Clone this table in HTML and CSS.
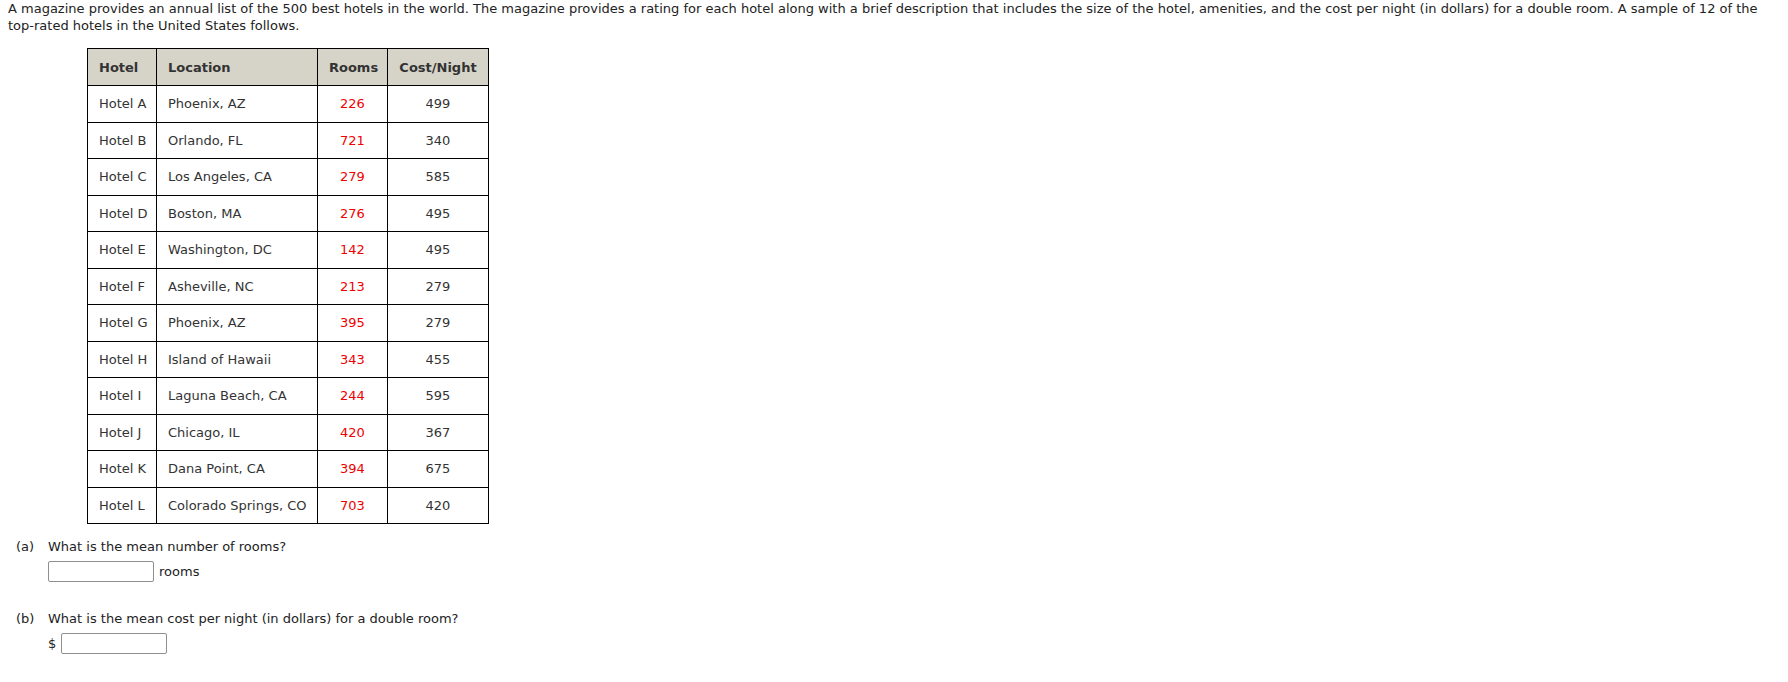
FILE: index.html
```html
<!DOCTYPE html>
<html>
<head>
<meta charset="utf-8">
<link rel="stylesheet" href="styles.css">
</head>
<body>
<p class="intro">A magazine provides an annual list of the 500 best hotels in the world. The magazine provides a rating for each hotel along with a brief description that includes the size of the hotel, amenities, and the cost per night (in dollars) for a double room. A sample of 12 of the top-rated hotels in the United States follows.</p>
<table class="data">
  <colgroup>
    <col class="c-hotel"><col class="c-loc"><col class="c-rooms"><col class="c-cost">
  </colgroup>
  <thead>
    <tr><th class="left">Hotel</th><th class="left">Location</th><th>Rooms</th><th>Cost/Night</th></tr>
  </thead>
  <tbody>
    <tr><td class="left">Hotel A</td><td class="left">Phoenix, AZ</td><td class="red">226</td><td>499</td></tr>
    <tr><td class="left">Hotel B</td><td class="left">Orlando, FL</td><td class="red">721</td><td>340</td></tr>
    <tr><td class="left">Hotel C</td><td class="left">Los Angeles, CA</td><td class="red">279</td><td>585</td></tr>
    <tr><td class="left">Hotel D</td><td class="left">Boston, MA</td><td class="red">276</td><td>495</td></tr>
    <tr><td class="left">Hotel E</td><td class="left">Washington, DC</td><td class="red">142</td><td>495</td></tr>
    <tr><td class="left">Hotel F</td><td class="left">Asheville, NC</td><td class="red">213</td><td>279</td></tr>
    <tr><td class="left">Hotel G</td><td class="left">Phoenix, AZ</td><td class="red">395</td><td>279</td></tr>
    <tr><td class="left">Hotel H</td><td class="left">Island of Hawaii</td><td class="red">343</td><td>455</td></tr>
    <tr><td class="left">Hotel I</td><td class="left">Laguna Beach, CA</td><td class="red">244</td><td>595</td></tr>
    <tr><td class="left">Hotel J</td><td class="left">Chicago, IL</td><td class="red">420</td><td>367</td></tr>
    <tr><td class="left">Hotel K</td><td class="left">Dana Point, CA</td><td class="red">394</td><td>675</td></tr>
    <tr><td class="left">Hotel L</td><td class="left">Colorado Springs, CO</td><td class="red">703</td><td>420</td></tr>
  </tbody>
</table>
<div class="questions">
  <div class="question q-a">
    <div class="q-line"><span class="q-label">(a)</span><span class="q-text">What is the mean number of rooms?</span></div>
    <div class="answer answer-a"><input class="box" type="text"><span class="unit">rooms</span></div>
  </div>
  <div class="question q-b">
    <div class="q-line"><span class="q-label">(b)</span><span class="q-text">What is the mean cost per night (in dollars) for a double room?</span></div>
    <div class="answer answer-b"><span class="dollar">$</span><input class="box" type="text"></div>
  </div>
</div>
</body>
</html>
```
FILE: styles.css
```css
html, body {
  margin: 0;
  padding: 0;
  background: #fff;
}
body {
  font-family: Verdana, "DejaVu Sans", sans-serif;
  font-size: 13px;
  color: #222;
}
.intro {
  margin: 0;
  padding: 0 8px;
  line-height: 17px;
}
.data {
  margin: 14px 0 0 87px;
  border-collapse: collapse;
  table-layout: fixed;
  width: 401px;
  color: #333;
}
.c-hotel { width: 69px; }
.c-loc { width: 161px; }
.c-rooms { width: 70px; }
.c-cost { width: 101px; }
.data th, .data td {
  border: 1px solid #000;
  text-align: center;
  padding: 0 11px;
  line-height: 17px;
  white-space: nowrap;
}
.data th {
  background: #d6d3c9;
  font-weight: bold;
  color: #333;
  height: 36px;
}
.data td {
  height: 35.5px;
}
.data .left {
  text-align: left;
}
.data td.red {
  color: #e00;
}
.questions {
  margin-top: 14px;
  color: #222;
}
.q-line {
  display: flex;
  line-height: 17px;
  padding-left: 16px;
}
.q-label {
  width: 32px;
  flex: none;
}
.answer {
  display: flex;
  align-items: center;
  margin-left: 48px;
  height: 21px;
}
.answer-a {
  margin-top: 6px;
}
.q-b {
  margin-top: 28px;
}
.answer-b {
  margin-top: 6px;
}
.box {
  box-sizing: border-box;
  width: 106px;
  height: 21px;
  margin: 0;
  padding: 0 3px;
  border: 1px solid #8f8f8f;
  border-radius: 2px;
  background: #fff;
  font: inherit;
}
.unit {
  margin-left: 5px;
}
.dollar {
  width: 13px;
}
```
